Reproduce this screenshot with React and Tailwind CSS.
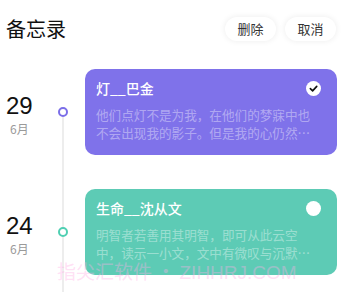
import React from "react";

const items = [
  {
    day: "29",
    month: "6月",
    title: "灯__巴金",
    body: "他们点灯不是为我，在他们的梦寐中也不会出现我的影子。但是我的心仍然因这灯光而得到了温暖。",
    card: "bg-[#7f72ea]",
    ring: "border-[#7b6ee8]",
    checked: true,
    first: true,
  },
  {
    day: "24",
    month: "6月",
    title: "生命__沈从文",
    body: "明智者若善用其明智，即可从此云空中，读示一小文，文中有微叹与沉默，微叹与沉默外有生命。",
    card: "bg-[#5dcbb5]",
    ring: "border-[#4fcfb2]",
    checked: false,
    first: false,
  },
];

function Row({ it }) {
  return (
    <div className="flex h-[120px]">
      <div className="w-[57px] pl-[6px] flex flex-col justify-center pt-[5px]">
        <div className="text-[24px] leading-[26px] text-[#111] font-['Liberation_Sans',sans-serif]">{it.day}</div>
        <div className="mt-[2px] pl-[4px] text-[12px] leading-[16px] text-[#9a9a9a]">{it.month}</div>
      </div>
      <div className="w-[12px] flex flex-col items-center">
        <div className={"w-[2px] flex-1 " + (it.first ? "bg-transparent" : "bg-[#ededed]")} />
        <div className={"w-[10px] h-[10px] rounded-full border-2 bg-white " + it.ring} />
        <div className="w-[2px] flex-1 bg-[#ededed]" />
      </div>
      <div className="flex-1 pl-[16px] pr-[10px] py-[17px]">
        <div className={"h-full rounded-[10px] pl-[11px] pr-[16px] pt-[9px] " + it.card}>
          <div className="flex items-center justify-between h-[20px]">
            <div className="text-[14px] leading-[20px] font-medium text-white">{it.title}</div>
            {it.checked ? (
              <div className="w-[15px] h-[15px] rounded-full bg-white flex items-center justify-center">
                <svg width="9" height="9" viewBox="0 0 10 10">
                  <path d="M1.5 5.2 L4 7.6 L8.6 2.6" fill="none" stroke="#111" strokeWidth="1.8" strokeLinecap="round" strokeLinejoin="round" />
                </svg>
              </div>
            ) : (
              <div className="w-[15px] h-[15px] rounded-full bg-white" />
            )}
          </div>
          <div className="mt-[8px] w-[220px] text-[12.6px] leading-[18px] text-white/40 line-clamp-2">{it.body}</div>
        </div>
      </div>
    </div>
  );
}

export default function App() {
  return (
    <div className="relative w-[347px] h-[295px] overflow-hidden bg-white font-['Noto_Sans_CJK_SC',sans-serif]">
      <div className="h-[52px] flex items-center justify-between pl-[6px] pr-[11px]">
        <div className="text-[20px] leading-[28px] text-[#111] font-normal pt-[5px]">备忘录</div>
        <div className="flex gap-[9px] pt-[6px]">
          <div className="w-[51px] h-[24px] rounded-[12px] bg-white shadow-[0_0_6px_rgba(0,0,0,0.08)] flex items-center justify-center text-[13px] text-[#333]">删除</div>
          <div className="w-[51px] h-[24px] rounded-[12px] bg-white shadow-[0_0_6px_rgba(0,0,0,0.08)] flex items-center justify-center text-[13px] text-[#333]">取消</div>
        </div>
      </div>
      {items.map((it) => (
        <Row key={it.day} it={it} />
      ))}
      <div className="absolute left-[57px] top-[259px] pointer-events-none text-[19px] leading-[24px] whitespace-nowrap text-[rgba(255,175,230,0.4)]">
        指尖汇软件 • <span className="font-['Liberation_Sans',sans-serif]">ZIHHRJ.COM</span>
      </div>
    </div>
  );
}
